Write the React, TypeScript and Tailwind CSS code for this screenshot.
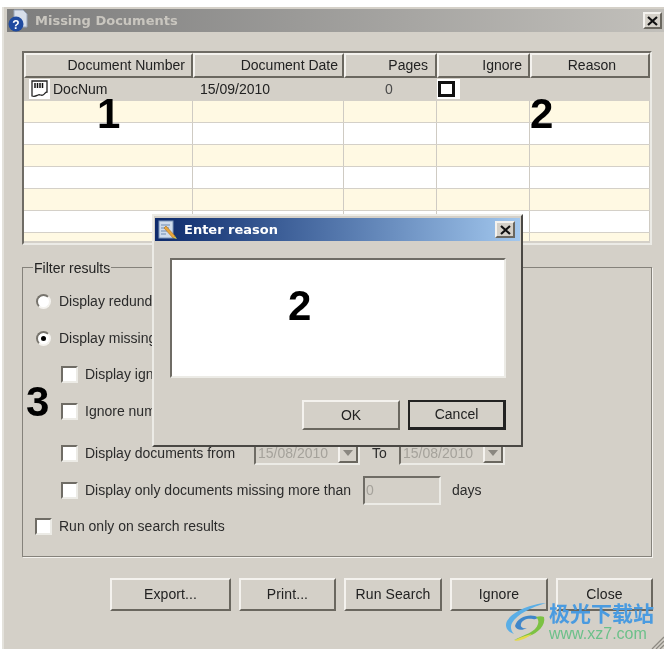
const raised = "border-t-2 border-l-2 border-b-2 border-r-2 border-t-[#f4f2ee] border-l-[#f4f2ee] border-b-[#6a675f] border-r-[#6a675f]";
const sunken = "border-t-2 border-l-2 border-b-2 border-r-2 border-t-[#6f6c65] border-l-[#6f6c65] border-b-[#ecebe6] border-r-[#ecebe6]";

const COLS = "grid grid-cols-[169px_151px_93px_93px_1fr]";
const HEADERS = [
  { label: "Document Number", pad: "pr-[6px]" },
  { label: "Document Date", pad: "pr-[4px]" },
  { label: "Pages", pad: "pr-[7px]" },
  { label: "Ignore", pad: "pr-[6px]" },
  { label: "Reason", pad: "pr-[32px]" },
];
const ROWS = [
  { bg: "bg-[#fff9e3]", h: "h-[22px]" },
  { bg: "bg-white", h: "h-[22px]" },
  { bg: "bg-[#fff9e3]", h: "h-[22px]" },
  { bg: "bg-white", h: "h-[22px]" },
  { bg: "bg-[#fff9e3]", h: "h-[22px]" },
  { bg: "bg-white", h: "h-[22px]" },
  { bg: "bg-[#fff9e3]", h: "h-[9px]" },
];

const Check = () => (
  <span className={`w-[17px] h-[17px] shrink-0 bg-white ${sunken} border-r-[#e6e4de] border-b-[#e6e4de]`} />
);

const Radio = ({ on = false }: { on?: boolean }) => (
  <span className="w-[15px] h-[15px] shrink-0 rounded-full bg-white border-2 border-t-[#77746d] border-l-[#77746d] border-b-[#f4f2ee] border-r-[#f4f2ee] flex items-center justify-center">
    {on && <span className="w-[5px] h-[5px] rounded-full bg-black" />}
  </span>
);

const Btn = ({ label, w }: { label: string; w: string }) => (
  <div className={`${w} h-[33px] ${raised} flex items-center justify-center text-[14px] tracking-[0.1px] text-[#222]`}>
    {label}
  </div>
);

const DateCombo = () => (
  <div className={`w-[106px] h-[23px] ${sunken} flex items-center justify-between text-[14px] text-[#a5a29b] pl-[2px]`}>
    <span>15/08/2010</span>
    <span className={`w-[20px] h-[19px] ${raised} flex items-center justify-center`}>
      <svg width="10" height="6" viewBox="0 0 10 6"><path d="M0 0h10L5 6z" fill="#8a8780" /></svg>
    </span>
  </div>
);

const CloseBtn = ({ w }: { w: string }) => (
  <div className={`${w} h-[17px] ${raised} bg-[#d4d0c8] flex items-center justify-center`}>
    <svg width="11" height="10" viewBox="0 0 11 10"><path d="M1 1l9 8M10 1L1 9" stroke="#111" strokeWidth="2.2" /></svg>
  </div>
);

const BarcodeDoc = () => (
  <span className="w-[21px] h-[20px] bg-white flex items-center justify-center shrink-0">
    <svg width="19" height="18" viewBox="0 0 19 18">
      <path d="M2 1h15v11c-2 0-2 2-4 3-2 1-3-1-5 0s-3 2-6 1z" fill="#fff" stroke="#222" strokeWidth="1.3" />
      <path d="M5 3v5M7.500 3v5M10 3v5M12.500 3v5" stroke="#111" strokeWidth="1.500" />
    </svg>
  </span>
);

const HelpIcon = () => (
  <svg width="22" height="24" viewBox="0 0 22 24" className="shrink-0">
    <path d="M7 1h9l4 4v13H7z" fill="#d7deea" stroke="#9aa6bb" />
    <circle cx="9" cy="15" r="7.500" fill="#1f4aa0" />
    <text x="9" y="19.500" textAnchor="middle" fontSize="12" fontWeight="700" fill="#fff" fontFamily="Liberation Sans, sans-serif">?</text>
  </svg>
);

const ReasonIcon = () => (
  <svg width="20" height="20" viewBox="0 0 20 20" className="shrink-0">
    <rect x="1" y="1" width="14" height="17" fill="#cfdcec" stroke="#7f98bb" />
    <path d="M3 5h9M3 8h8M3 11h6M3 14h5" stroke="#6f8bb0" />
    <path d="M8 6l9 10-2 2L6 8z" fill="#e9a63c" stroke="#a9701f" strokeWidth="0.6" />
    <path d="M15 18l2-2 2 3z" fill="#d8c24a" />
  </svg>
);

const Logo = () => (
  <svg width="42" height="40" viewBox="0 0 42 40" className="shrink-0">
    <path d="M41 1C27 2 9 8 2 19c-3 6 1 11 7 13-3-3-4-7-2-11C12 12 27 5 41 1z" fill="#5aaee6" />
    <path d="M10 24c2-8 12-12 20-10 4 1 2 4-2 3-6-1-11 1-12 5-1 3 2 5 6 4-5 3-11 2-12-2z" fill="#3f86c9" />
    <path d="M39 15c2 8-6 16-15 19-5 2-10 3-15 4 10-5 22-8 24-16 1-3 0-5-2-7 3-1 6-1 8 0z" fill="#7cc243" />
    <path d="M9 39c6-4 13-6 18-7-5 4-11 7-18 7z" fill="#e6d94a" />
  </svg>
);

export default function App() {
  return (
    <div className="relative w-[664px] h-[649px] overflow-hidden bg-white pt-[7px] pl-[2px] [font-family:'Liberation_Sans',sans-serif] text-[#222] blur-[0.5px]">
      <div className="h-[642px] bg-[#d4d0c8] border-l-2 border-l-[#e4e2dc] pt-[2px] pl-[3px]">
        {/* Title bar */}
        <div className="h-[23px] flex items-center gap-[6px] pr-[2px] bg-gradient-to-r from-[#7d7d7d] to-[#c2c0bb]">
          <HelpIcon />
          <span className="flex-1 [font-family:'DejaVu_Sans',sans-serif] font-bold text-[13px] text-[#c9c6bf]">Missing Documents</span>
          <CloseBtn w="w-[19px]" />
        </div>

        {/* Table */}
        <div className={`ml-[15px] mt-[19px] w-[630px] h-[194px] ${sunken} overflow-hidden`}>
          <div className={`${COLS} h-[25px] bg-[#d4d0c8]`}>
            {HEADERS.map((h) => (
              <div key={h.label} className={`${raised} flex items-center justify-end text-[14px] ${h.pad}`}>
                {h.label}
              </div>
            ))}
          </div>
          <div className={`${COLS} h-[22px] bg-[#d4d0c8] text-[14px] items-center`}>
            <div className="flex items-center gap-[3px] pl-[5px]">
              <BarcodeDoc />
              <span>DocNum</span>
            </div>
            <div className="pl-[7px]">15/09/2010</div>
            <div className="pl-[41px] text-[#4a4a4a]">0</div>
            <div className="h-[20px] w-[23px] bg-white flex items-center">
              <span className="w-[17px] h-[16px] border-[3px] border-[#111] bg-white ml-[1px]" />
            </div>
            <div />
          </div>
          {ROWS.map((r, i) => (
            <div key={i} className={`${COLS} ${r.h} ${r.bg} border-t border-t-[#d4d0c8]`}>
              {[0, 1, 2, 3, 4].map((c) => (
                <div key={c} className="border-r border-r-[#cfcbc3]" />
              ))}
            </div>
          ))}
        </div>

        {/* Filter results */}
        <div className="ml-[15px] mt-[22px] w-[630px] h-[290px] border border-[#85827b] shadow-[1px_1px_0_#f4f2ee] px-[12px] flex flex-col">
          <div className="-mt-[9px] h-[18px] w-fit bg-[#d4d0c8] -ml-[2px] px-[1px] text-[14px] leading-[18px]">Filter results</div>
          <div className="mt-[6px] flex flex-col text-[14px] text-[#2b2b2b]">
            <div className="h-[37px] flex items-center gap-[8px] pl-[1px]"><Radio /><span>Display redundant documents</span></div>
            <div className="h-[36px] flex items-center gap-[8px] pl-[1px]"><Radio on /><span>Display missing documents</span></div>
            <div className="h-[37px] flex items-center gap-[7px] pl-[26px]"><Check /><span>Display ignored documents</span></div>
            <div className="h-[37px] flex items-center gap-[7px] pl-[26px]"><Check /><span>Ignore numbers</span></div>
            <div className="h-[46px] flex items-center gap-[7px] pl-[26px]">
              <Check />
              <span className="w-[162px] whitespace-nowrap">Display documents from</span>
              <DateCombo />
              <span className="w-[25px] text-center">To</span>
              <DateCombo />
            </div>
            <div className="h-[29px] flex items-center gap-[7px] pl-[26px]">
              <Check />
              <span className="w-[271px] whitespace-nowrap">Display only documents missing more than</span>
              <div className={`w-[78px] h-[29px] ${sunken} flex items-center pl-[1px] text-[#a5a29b]`}>0</div>
              <span className="ml-[4px]">days</span>
            </div>
            <div className="h-[42px] flex items-center gap-[7px]"><Check /><span>Run only on search results</span></div>
          </div>
        </div>

        {/* Action buttons */}
        <div className="mt-[21px] ml-[103px] flex gap-[8px]">
          <Btn label="Export..." w="w-[121px]" />
          <Btn label="Print..." w="w-[97px]" />
          <Btn label="Run Search" w="w-[98px]" />
          <Btn label="Ignore" w="w-[98px]" />
          <Btn label="Close" w="w-[97px]" />
        </div>
      </div>

      {/* Numbers drawn over the table */}
      <span className="absolute left-[97px] top-[90px] text-[42px] leading-[48px] font-bold text-black">1</span>
      <span className="absolute left-[530px] top-[90px] text-[42px] leading-[48px] font-bold text-black">2</span>
      <span className="absolute left-[26px] top-[378px] text-[42px] leading-[48px] font-bold text-black">3</span>

      {/* Enter reason dialog */}
      <div className="absolute left-[152px] top-[214px] w-[371px] h-[233px] bg-[#d4d0c8] border-t-2 border-l-2 border-t-[#ecebe6] border-l-[#ecebe6] border-b-2 border-r-2 border-b-[#4a4844] border-r-[#4a4844] pt-[2px] px-[1px]">
        <div className="h-[23px] flex items-center gap-[6px] pl-[3px] pr-[5px] bg-gradient-to-r from-[#0e2a6b] to-[#a3c8ee]">
          <ReasonIcon />
          <span className="flex-1 [font-family:'DejaVu_Sans',sans-serif] font-bold text-[13px] text-white">Enter reason</span>
          <CloseBtn w="w-[20px]" />
        </div>
        <div className={`mt-[17px] ml-[15px] w-[336px] h-[120px] bg-white ${sunken}`} />
        <div className="mt-[22px] ml-[147px] flex gap-[8px] text-[14px]">
          <div className={`w-[98px] h-[30px] ${raised} flex items-center justify-center`}>OK</div>
          <div className="w-[98px] h-[30px] border-2 border-[#222] border-b-[3px] border-r-[3px] flex items-center justify-center">Cancel</div>
        </div>
        <span className="absolute left-[134px] top-[66px] text-[42px] leading-[48px] font-bold text-black">2</span>
      </div>

      {/* Watermark */}
      <div className="absolute left-[505px] top-[600px] flex items-center gap-[2px]">
        <Logo />
        <div className="flex flex-col">
          <span className="[font-family:'Noto_Sans_CJK_SC',sans-serif] font-bold text-[21px] leading-[24px] text-[#4a9be0]">极光下载站</span>
          <span className="mt-[1px] text-[16px] leading-[18px] text-[#6cc08a]">www.xz7.com</span>
        </div>
      </div>
      {/* Resize grip */}
      <svg width="14" height="14" viewBox="0 0 14 14" className="absolute right-0 bottom-0">
        <path d="M14 2L2 14M14 6L6 14M14 10l-4 4" stroke="#8d8a83" strokeWidth="1.300" />
      </svg>
    </div>
  );
}
